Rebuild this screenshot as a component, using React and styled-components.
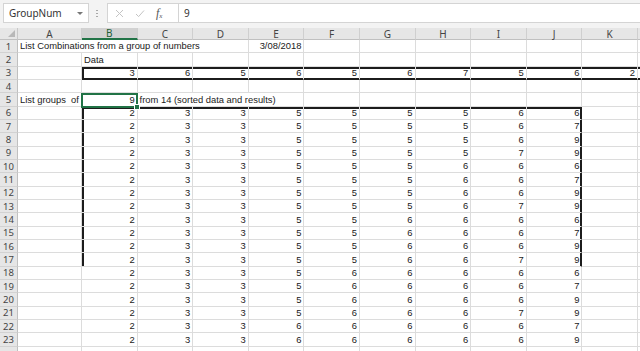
import React from 'react';
import styled, { createGlobalStyle } from 'styled-components';

const GlobalStyle = createGlobalStyle`
  body {
    margin: 0;
    background: #fff;
    overflow: hidden;
  }
`;

const COLS = ['A', 'B', 'C', 'D', 'E', 'F', 'G', 'H', 'I', 'J', 'K', 'L'];
const ROWS = 24;

const data = [3, 6, 5, 6, 5, 6, 7, 5, 6, 2];
const results = [
  [2, 3, 3, 5, 5, 5, 5, 6, 6],
  [2, 3, 3, 5, 5, 5, 5, 6, 7],
  [2, 3, 3, 5, 5, 5, 5, 6, 9],
  [2, 3, 3, 5, 5, 5, 5, 7, 9],
  [2, 3, 3, 5, 5, 5, 6, 6, 6],
  [2, 3, 3, 5, 5, 5, 6, 6, 7],
  [2, 3, 3, 5, 5, 5, 6, 6, 9],
  [2, 3, 3, 5, 5, 5, 6, 7, 9],
  [2, 3, 3, 5, 5, 6, 6, 6, 6],
  [2, 3, 3, 5, 5, 6, 6, 6, 7],
  [2, 3, 3, 5, 5, 6, 6, 6, 9],
  [2, 3, 3, 5, 5, 6, 6, 7, 9],
  [2, 3, 3, 5, 6, 6, 6, 6, 6],
  [2, 3, 3, 5, 6, 6, 6, 6, 7],
  [2, 3, 3, 5, 6, 6, 6, 6, 9],
  [2, 3, 3, 5, 6, 6, 6, 7, 9],
  [2, 3, 3, 6, 6, 6, 6, 6, 7],
  [2, 3, 3, 6, 6, 6, 6, 6, 9],
];

// build the cell map
const cells = {
  A1: { text: 'List Combinations from a group of numbers', span: 4, left: true },
  E1: { text: '3/08/2018' },
  B2: { text: 'Data', left: true },
  A5: { text: 'List groups  of', left: true },
  B5: { text: 9, selected: true },
  C5: { text: 'from 14 (sorted data and results)', span: 3, left: true },
};
COLS.slice(1).forEach((c, i) => {
  cells[c + 3] = { text: data[i], bt: true, bb: true, bl: c === 'B' };
});
results.forEach((row, r) => {
  row.forEach((v, i) => {
    const c = COLS[i + 1];
    const n = r + 6;
    cells[c + n] = {
      text: v,
      bt: n === 6,
      bl: c === 'B' && n <= 17,
      br: c === 'J' && n <= 17,
    };
  });
});

const INK = '#1c1c1c';

// thick Excel borders drawn as inset shadows so the row keeps its height
const edges = p => {
  const s = [];
  if (p.$bt) s.push(`inset 0 2px 0 ${INK}`);
  if (p.$bb) s.push(`inset 0 -1px 0 ${INK}`);
  if (p.$bl) s.push(`inset 2px 0 0 ${INK}`);
  if (p.$br) s.push(`inset -1px 0 0 ${INK}`);
  return s.length ? s.join(', ') : 'none';
};

const Frame = styled.div`
  width: 640px;
  height: 351px;
  overflow: hidden;
  background: #fff;
`;

const Bar = styled.div`
  display: flex;
  align-items: flex-start;
  box-sizing: border-box;
  height: 28px;
  padding: 3px 0 0 3px;
  background: #f3f3f3;
  font-family: "Noto Sans", "Open Sans", sans-serif;
`;

const NameBox = styled.div`
  box-sizing: border-box;
  width: 86px;
  height: 20px;
  display: flex;
  align-items: center;
  justify-content: space-between;
  padding: 0 5px 0 5px;
  background: #fff;
  border: 1px solid #d4d4d4;
  font-size: 10px;
  color: #333;
`;

const Arrow = styled.span`
  width: 0;
  height: 0;
  border-left: 3px solid transparent;
  border-right: 3px solid transparent;
  border-top: 3px solid #777;
`;

const Grip = styled.div`
  width: 2px;
  height: 9px;
  margin: 6px 9px 0 7px;
  background: radial-gradient(circle, #a8a8a8 0.8px, transparent 1px) 0 0 / 2px 3px;
`;

const FuncBox = styled.div`
  box-sizing: border-box;
  width: 71px;
  height: 20px;
  display: flex;
  align-items: center;
  gap: 11px;
  padding-left: 7px;
  background: #fff;
  border: 1px solid #d4d4d4;
  border-right: none;
  color: #c4c4c4;
`;

const Fx = styled.span`
  font-family: "Liberation Serif", serif;
  font-style: italic;
  font-size: 12px;
  line-height: 1;
  color: #555;

  sub {
    font-size: 7px;
    vertical-align: -1px;
  }
`;

const Input = styled.div`
  flex: 1;
  box-sizing: border-box;
  height: 20px;
  display: flex;
  align-items: center;
  padding-left: 5px;
  background: #fff;
  border: 1px solid #d4d4d4;
  border-right: none;
  font-size: 10px;
  color: #333;
`;

const Sheet = styled.div`
  display: grid;
  grid-template-columns: 18px 64px repeat(11, 55.6px);
  grid-template-rows: 12px repeat(${ROWS}, 13.3333px);
  font-family: "Liberation Sans", Arial, sans-serif;
`;

const Corner = styled.div`
  position: relative;
  box-sizing: border-box;
  background: #e6e6e6;
  border-right: 1px solid #c8c8c8;
  border-bottom: 1px solid #c0c0c0;

  &::after {
    content: '';
    position: absolute;
    right: 2px;
    bottom: 2px;
    border-left: 7px solid transparent;
    border-bottom: 7px solid #b8b8b8;
  }
`;

const ColHead = styled.div`
  box-sizing: border-box;
  display: flex;
  align-items: center;
  justify-content: center;
  background: ${p => (p.$active ? '#d2d2d2' : '#e6e6e6')};
  border-right: 1px solid #cfcfcf;
  border-bottom: ${p => (p.$active ? '2px solid #217346' : '1px solid #c0c0c0')};
  font-family: "Noto Sans", "Open Sans", sans-serif;
  font-size: 10px;
  color: ${p => (p.$active ? '#1e5e35' : '#444')};
`;

const RowHead = styled.div`
  box-sizing: border-box;
  display: flex;
  align-items: center;
  justify-content: center;
  background: #e6e6e6;
  border-right: 1px solid #c0c0c0;
  border-bottom: 1px solid #d2d2d2;
  font-family: "Noto Sans", "Open Sans", sans-serif;
  font-size: 9.5px;
  color: #444;
`;

const Cell = styled.div`
  position: relative;
  box-sizing: border-box;
  grid-column: span ${p => p.$span || 1};
  display: flex;
  align-items: flex-end;
  justify-content: ${p => (p.$left ? 'flex-start' : 'flex-end')};
  padding: 0 2px 1px 2px;
  border-right: 1px solid ${p => (p.$br ? INK : '#dcdcdc')};
  border-bottom: 1px solid ${p => (p.$bb ? INK : '#dcdcdc')};
  box-shadow: ${edges};
  font-size: 9.4px;
  line-height: 11px;
  color: #1a1a1a;
  white-space: pre;
`;

const Selection = styled.div`
  position: absolute;
  top: 0;
  left: -1px;
  right: -1px;
  bottom: -2px;
  border: 2px solid #217346;
  z-index: 2;
`;

const FillHandle = styled.div`
  position: absolute;
  right: -4px;
  bottom: -4px;
  width: 4px;
  height: 4px;
  background: #217346;
  border: 1px solid #fff;
`;

const X = () => (
  <svg width="9" height="9" viewBox="0 0 9 9">
    <path d="M1 1L8 8M8 1L1 8" stroke="currentColor" strokeWidth="1" />
  </svg>
);

const Check = () => (
  <svg width="10" height="9" viewBox="0 0 10 9">
    <path d="M1 5L3.6 7.6L9 1.5" stroke="currentColor" strokeWidth="1" fill="none" />
  </svg>
);

function Row({ n }) {
  // the last row only peeks in at the bottom edge, its number is out of view
  const out = [<RowHead key="h">{n < ROWS ? n : ''}</RowHead>];
  let skip = 0;
  COLS.forEach(c => {
    if (skip > 0) {
      skip -= 1;
      return;
    }
    const cell = cells[c + n] || {};
    if (cell.span) skip = cell.span - 1;
    out.push(
      <Cell
        key={c}
        $span={cell.span}
        $left={cell.left}
        $bt={cell.bt}
        $bb={cell.bb}
        $bl={cell.bl}
        $br={cell.br}
      >
        {cell.text}
        {cell.selected && (
          <Selection>
            <FillHandle />
          </Selection>
        )}
      </Cell>
    );
  });
  return out;
}

export default function App() {
  return (
    <Frame>
      <GlobalStyle />
      <Bar>
        <NameBox>
          GroupNum
          <Arrow />
        </NameBox>
        <Grip />
        <FuncBox>
          <X />
          <Check />
          <Fx>
            f<sub>x</sub>
          </Fx>
        </FuncBox>
        <Input>9</Input>
      </Bar>
      <Sheet>
        <Corner />
        {COLS.map(c => (
          <ColHead key={c} $active={c === 'B'}>
            {c === 'L' ? '' : c}
          </ColHead>
        ))}
        {Array.from({ length: ROWS }, (_, i) => (
          <Row key={i} n={i + 1} />
        ))}
      </Sheet>
    </Frame>
  );
}
